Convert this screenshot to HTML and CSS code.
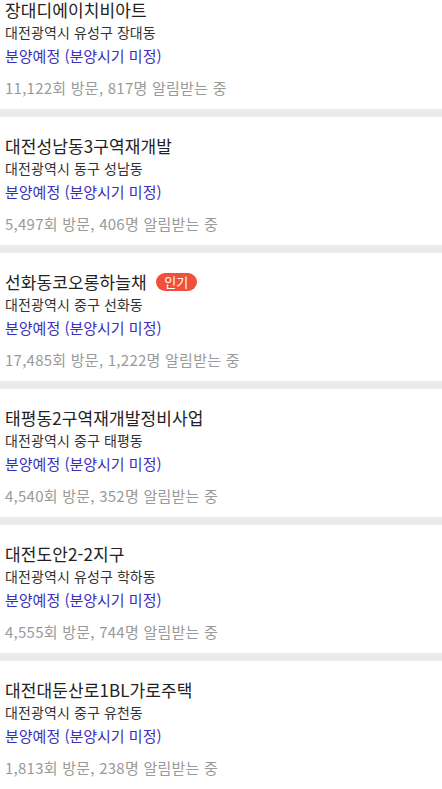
FILE: index.html
```html
<!DOCTYPE html>
<html lang="ko">
<head>
<meta charset="utf-8">
<link rel="stylesheet" href="styles.css">
</head>
<body>
<div class="list">
  <div class="item">
    <div class="title">장대디에이치비아트</div>
    <div class="addr">대전광역시 유성구 장대동</div>
    <div class="status">분양예정 (분양시기 미정)</div>
    <div class="stats">11,122회 방문, 817명 알림받는 중</div>
  </div>
  <div class="item">
    <div class="title">대전성남동3구역재개발</div>
    <div class="addr">대전광역시 동구 성남동</div>
    <div class="status">분양예정 (분양시기 미정)</div>
    <div class="stats">5,497회 방문, 406명 알림받는 중</div>
  </div>
  <div class="item">
    <div class="title">선화동코오롱하늘채<span class="badge">인기</span></div>
    <div class="addr">대전광역시 중구 선화동</div>
    <div class="status">분양예정 (분양시기 미정)</div>
    <div class="stats">17,485회 방문, 1,222명 알림받는 중</div>
  </div>
  <div class="item">
    <div class="title">태평동2구역재개발정비사업</div>
    <div class="addr">대전광역시 중구 태평동</div>
    <div class="status">분양예정 (분양시기 미정)</div>
    <div class="stats">4,540회 방문, 352명 알림받는 중</div>
  </div>
  <div class="item">
    <div class="title">대전도안2-2지구</div>
    <div class="addr">대전광역시 유성구 학하동</div>
    <div class="status">분양예정 (분양시기 미정)</div>
    <div class="stats">4,555회 방문, 744명 알림받는 중</div>
  </div>
  <div class="item">
    <div class="title">대전대둔산로1BL가로주택</div>
    <div class="addr">대전광역시 중구 유천동</div>
    <div class="status">분양예정 (분양시기 미정)</div>
    <div class="stats">1,813회 방문, 238명 알림받는 중</div>
  </div>
</div>
</body>
</html>
```

FILE: styles.css
```css
html, body {
  margin: 0;
  padding: 0;
  background: #ffffff;
}
body {
  font-family: "Noto Sans CJK KR", "Noto Sans", sans-serif;
  overflow: hidden;
}
.list {
  margin-top: -19px;
}
.item {
  height: 136px;
  box-sizing: border-box;
  padding: 17px 5px 0 5px;
  border-bottom: 8px solid #ebebeb;
}
.title {
  font-size: 17px;
  line-height: 24px;
  color: #222222;
  display: flex;
  align-items: center;
  gap: 9px;
  white-space: nowrap;
  letter-spacing: 0.1px;
}
.addr {
  font-size: 14px;
  line-height: 20px;
  color: #333333;
  letter-spacing: 0.1px;
}
.status {
  font-size: 15px;
  line-height: 22px;
  color: #3a30b8;
  margin-top: 3px;
}
.stats {
  font-size: 15px;
  line-height: 22px;
  color: #9a9a9a;
  margin-top: 10px;
  letter-spacing: 0.25px;
}
.badge {
  display: inline-flex;
  align-items: center;
  justify-content: center;
  width: 41px;
  height: 18px;
  border-radius: 9px;
  background: #f2503c;
  color: #ffffff;
  font-size: 13px;
  line-height: 18px;
  letter-spacing: 0;
}
```
